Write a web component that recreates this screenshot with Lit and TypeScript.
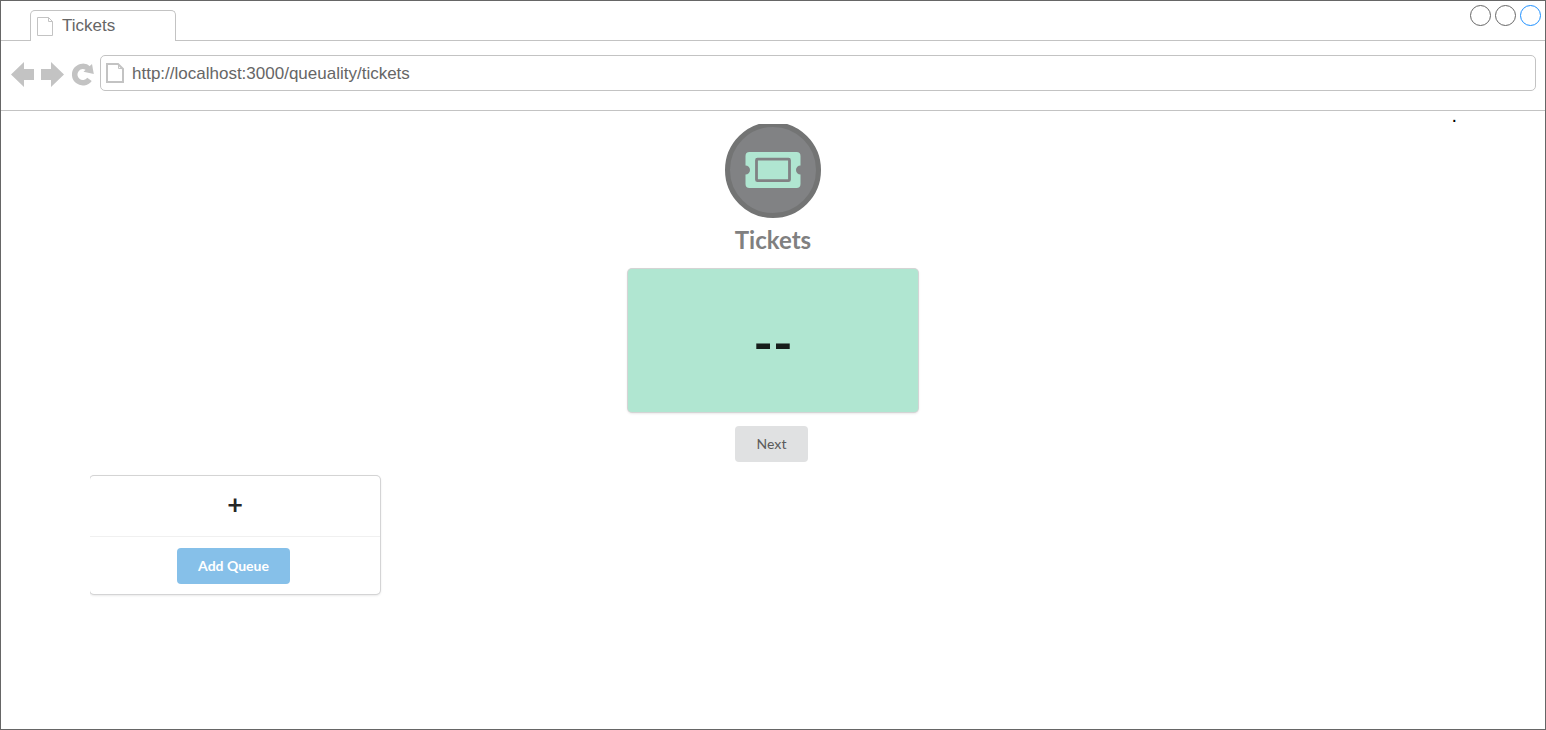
import { LitElement, html, css, svg } from "lit";
import { customElement, property } from "lit/decorators.js";

@customElement("page-glyph")
class PageGlyph extends LitElement {
  @property({ type: Number }) weight = 1;

  static styles = css`
    :host { display: block; flex: none; }
    svg { display: block; }
  `;

  render() {
    return html`<svg width="18" height="20" viewBox="0 0 18 20" fill="none" stroke="#c3c3c3" aria-hidden="true">
      ${this.weight > 1
        ? svg`<path stroke-width="2" d="M1 1H12L17 6V19H1Z"/><path stroke-width="1" d="M12.500 1V5.500H17"/>`
        : svg`<path d="M1.500 1.500H12.500L16.500 5.500V19.500H1.500Z"/><path d="M12.500 1.500V5.500H16.500"/>`}
    </svg>`;
  }
}

@customElement("browser-chrome")
class BrowserChrome extends LitElement {
  @property() heading = "";
  @property() address = "";

  static styles = css`
    :host { display: block; font-family: "Liberation Sans", Arial, sans-serif; color: #666; }
    .strip {
      display: flex; align-items: flex-end; justify-content: space-between;
      box-sizing: border-box; height: 40px; padding-left: 29px;
      border-bottom: 1px solid #c3c3c3;
    }
    .tab {
      display: flex; align-items: center; gap: 8px; box-sizing: border-box;
      width: 146px; height: 31px; margin-bottom: -1px; padding: 0 5px;
      border: 1px solid #c3c3c3; border-bottom: 0; border-radius: 5px 5px 0 0;
      background: #fff; font-size: 17px; line-height: 20px;
    }
    .window { display: flex; gap: 4px; align-self: flex-start; padding: 4px 4px 0 0; }
    .window button {
      box-sizing: border-box; width: 21px; height: 21px; padding: 0;
      border: 1px solid #666; border-radius: 50%; background: none;
    }
    .window .close { border-color: #1e90ff; }
    .bar {
      display: flex; box-sizing: border-box; height: 70px;
      padding: 14px 9px 19px 10px; border-bottom: 1px solid #c3c3c3;
    }
    .nav { display: flex; gap: 7px; align-items: center; margin-right: 5px; }
    .nav button { display: block; padding: 3px 0 0; border: 0; background: none; }
    .nav svg { display: block; }
    .location {
      display: flex; flex: 1; align-items: center; gap: 8px; padding: 0 5px;
      border: 1px solid #c3c3c3; border-radius: 5px; background: #fff;
    }
    .location input {
      flex: 1; min-width: 0; padding: 2px 0 0; border: 0; outline: 0; background: none;
      font: 17px/20px "Liberation Sans", Arial, sans-serif; color: #666;
    }
  `;

  render() {
    return html`
      <div class="strip">
        <div class="tab"><page-glyph></page-glyph><span>${this.heading}</span></div>
        <div class="window">
          <button aria-label="Minimize"></button>
          <button aria-label="Maximize"></button>
          <button class="close" aria-label="Close"></button>
        </div>
      </div>
      <div class="bar">
        <div class="nav">
          <button aria-label="Back"><svg width="23" height="25" viewBox="0 0 23 25"><path fill="#c3c3c3" d="M0 12.500L13 0V7H23V18H13V25Z"/></svg></button>
          <button aria-label="Forward"><svg width="23" height="25" viewBox="0 0 23 25"><path fill="#c3c3c3" d="M23 12.500L10 0V7H0V18H10V25Z"/></svg></button>
          <button aria-label="Reload"><svg width="24" height="25" viewBox="0 0 24 25"><path fill="none" stroke="#c3c3c3" stroke-width="5.500" d="M18.500 17.400A8.200 8.200 0 1 1 17.600 6.700"/><path fill="#c3c3c3" d="M21 2L22.800 12L12.500 9.800Z"/></svg></button>
        </div>
        <label class="location">
          <page-glyph weight="2"></page-glyph>
          <input type="text" aria-label="Address" .value=${this.address} />
        </label>
      </div>
    `;
  }
}

@customElement("app-root")
class AppRoot extends LitElement {
  static styles = css`
    :host {
      display: block; box-sizing: border-box; min-height: 100vh;
      border: 1px solid #666; background: #fff;
      font-family: Lato, "Helvetica Neue", Arial, sans-serif; font-size: 14px; line-height: 20px;
    }
    main { position: relative; padding: 13px 89px 0; }
    .mark { position: absolute; top: -6px; right: 88px; font: 20px/20px "Liberation Sans", Arial, sans-serif; color: #000; }
    .hero { display: flex; flex-direction: column; align-items: center; }
    .badge { display: block; }
    h1 { margin: 6px 0 12px; font-size: 24px; line-height: 32px; font-weight: 700; color: #808080; }
    .card {
      display: flex; flex-direction: column; align-items: center; width: 290px; border-radius: 4px;
      box-shadow: 0 1px 3px 0 #d4d4d5, 0 0 0 1px #d4d4d5; color: rgba(0, 0, 0, 0.87);
    }
    .current { margin: 1px 0 14px; background: #b0e6d1; }
    .number { padding: 41px 0 38px; font-size: 53px; line-height: 64px; font-weight: 700; }
    button {
      box-sizing: border-box; height: 36px; margin: 0 3px 0 0; padding: 0 21px;
      border: 0; border-radius: 4px; background: #e0e1e2; color: rgba(0, 0, 0, 0.6);
      font: 700 14px/14px Lato, "Helvetica Neue", Arial, sans-serif;
    }
    .next { padding: 0 22px; font-weight: 500; }
    .add { background: #86c0e9; color: #fff; }
    .queue { margin-top: 14px; clip-path: inset(-5px -5px -5px 0); }
    .plus { padding: 12px 0 16px; font-size: 27px; line-height: 32px; font-weight: 700; }
    .actions { display: flex; justify-content: center; align-self: stretch; padding: 11px 0 10px; border-top: 1px solid #f0f0f0; }
  `;

  render() {
    return html`
      <browser-chrome heading="Tickets" address="http://localhost:3000/queuality/tickets"></browser-chrome>
      <main>
        <span class="mark">.</span>
        <section class="hero">
          <svg class="badge" width="96" height="94" viewBox="0 2 96 94" aria-hidden="true">
            <circle cx="48" cy="48" r="45.500" fill="#818284" stroke="#737474" stroke-width="5"/>
            <path fill="#b0e6d1" d="M24.500 30H71.500Q75.500 30 75.500 34V43.500A4.500 4.500 0 0 0 75.500 52.500V62Q75.500 66 71.500 66H24.500Q20.500 66 20.500 62V52.500A4.500 4.500 0 0 0 20.500 43.500V34Q20.500 30 24.500 30Z"/>
            <rect x="31.500" y="37.200" width="33" height="21.500" rx="1" fill="none" stroke="#818284" stroke-width="2.800"/>
          </svg>
          <h1>Tickets</h1>
          <div class="card current"><div class="number">--</div></div>
          <button class="next">Next</button>
        </section>
        <section class="card queue">
          <div class="plus">+</div>
          <div class="actions"><button class="add">Add Queue</button></div>
        </section>
      </main>
    `;
  }
}
